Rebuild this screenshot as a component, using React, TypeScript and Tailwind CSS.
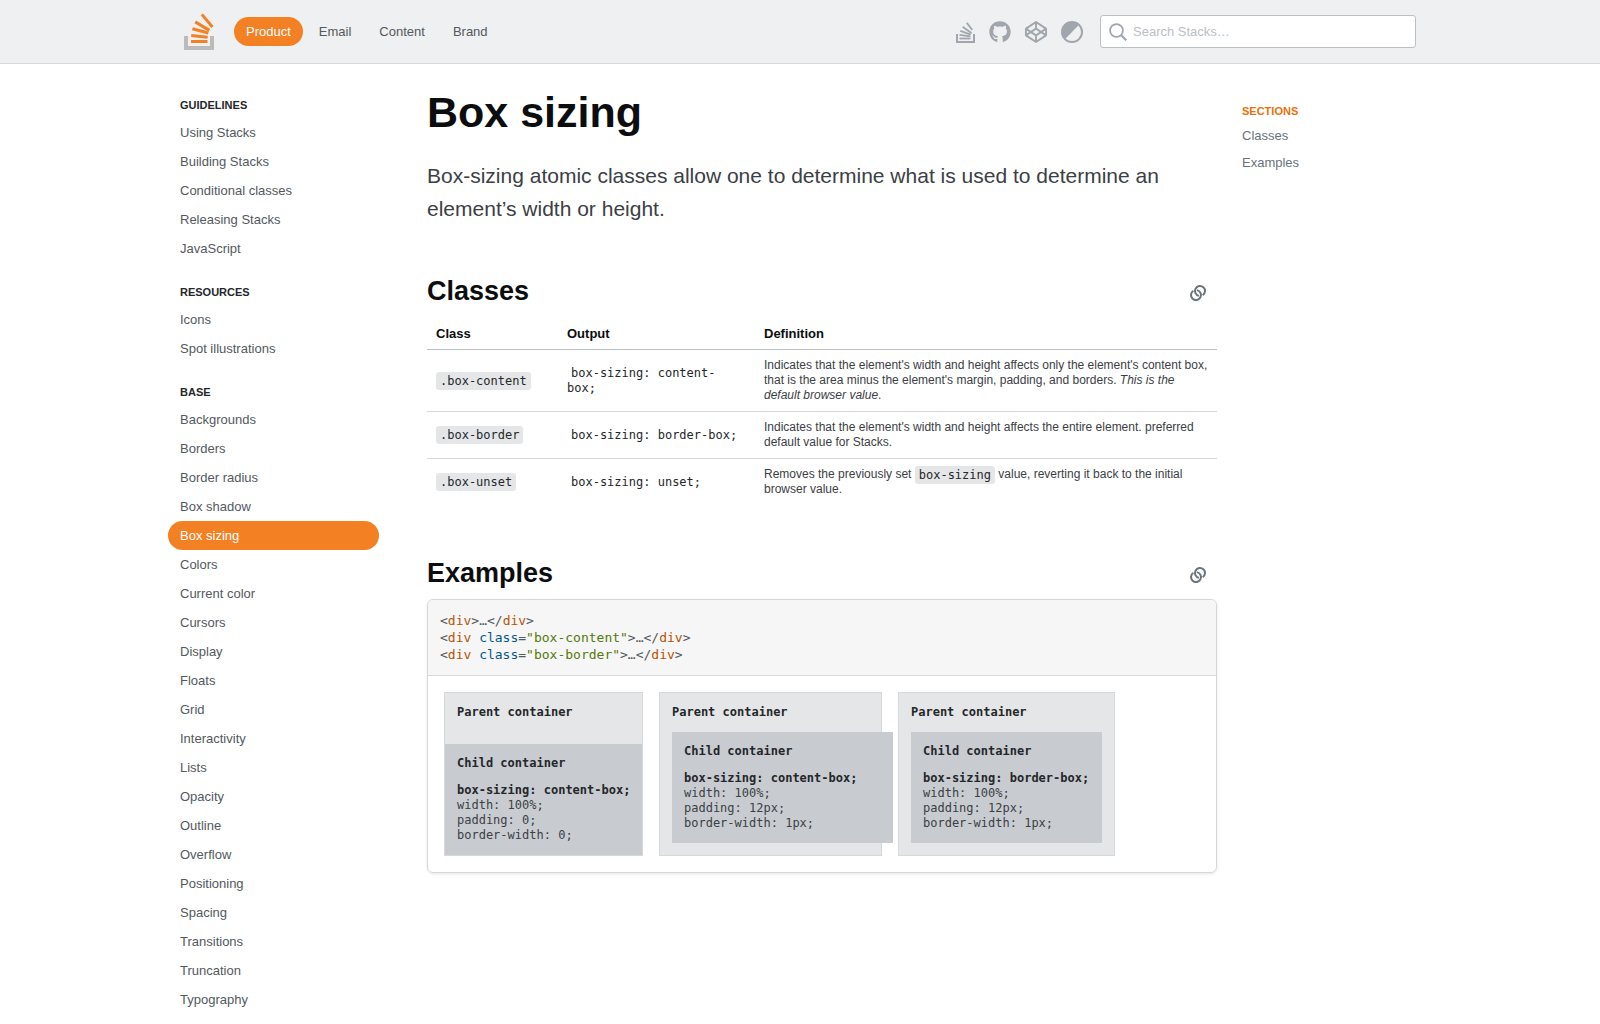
import React from 'react';
import { FaCodepen, FaGithub } from 'react-icons/fa';

const navItems = ['Product', 'Email', 'Content', 'Brand'];

const sideNav = [
    { title: 'Guidelines', items: ['Using Stacks', 'Building Stacks', 'Conditional classes', 'Releasing Stacks', 'JavaScript'] },
    { title: 'Resources', items: ['Icons', 'Spot illustrations'] },
    {
        title: 'Base',
        items: [
            'Backgrounds', 'Borders', 'Border radius', 'Box shadow', 'Box sizing', 'Colors', 'Current color', 'Cursors',
            'Display', 'Floats', 'Grid', 'Interactivity', 'Lists', 'Opacity', 'Outline', 'Overflow', 'Positioning',
            'Spacing', 'Transitions', 'Truncation', 'Typography', 'Vertical align',
        ],
    },
];

const mono = "font-['DejaVu_Sans_Mono',monospace]";

function StacksLogo() {
    return (
        <svg width="32" height="37" viewBox="0 0 32 37" fill="none">
            <path d="M0 23h4v10h22V23h4v14H0z" fill="#bcbbbb" />
            <g fill="#f48024">
                <rect x="7" y="27" width="16.5" height="3" />
                <rect x="7.4" y="21" width="16.5" height="3" transform="rotate(6 7.4 21)" />
                <rect x="8.8" y="14.3" width="16.5" height="3" transform="rotate(15 8.8 14.3)" />
                <rect x="12" y="7.6" width="16.5" height="3" transform="rotate(31 12 7.6)" />
                <rect x="19" y="0.4" width="16.5" height="3" transform="rotate(50 19 0.4)" />
            </g>
        </svg>
    );
}

function StacksGlyph() {
    return (
        <svg width="19" height="22" viewBox="0 0 19 22" fill="none">
            <path d="M0 13h2v7h15v-7h2v9H0z" fill="#9fa6ad" />
            <g fill="#9fa6ad">
                <rect x="3.5" y="16.6" width="11" height="1.8" />
                <rect x="3.6" y="13" width="11" height="1.8" transform="rotate(8 3.6 13)" />
                <rect x="4.6" y="9" width="11" height="1.8" transform="rotate(20 4.6 9)" />
                <rect x="7.2" y="5" width="11" height="1.8" transform="rotate(36 7.2 5)" />
                <rect x="11.4" y="1.2" width="9" height="1.8" transform="rotate(52 11.4 1.2)" />
            </g>
        </svg>
    );
}

function ThemeIcon() {
    return (
        <svg width="22" height="22" viewBox="0 0 22 22">
            <circle cx="11" cy="11" r="11" fill="#9fa6ad" />
            <path d="M17.4 4.6a9 9 0 0 1-12.8 12.8z" fill="#eff0f1" />
        </svg>
    );
}

function SearchIcon() {
    return (
        <svg width="18" height="18" viewBox="0 0 18 18" fill="none" stroke="#9fa6ad" strokeWidth="1.8">
            <circle cx="7.5" cy="7.5" r="6.4" />
            <path d="M12 12l5.2 5.2" strokeWidth="2.2" />
        </svg>
    );
}

function LinkIcon() {
    return (
        <svg width="18" height="18" viewBox="0 0 18 18" fill="none" stroke="#6a737c" strokeWidth="2">
            <path d="M9.96 11.89A5 5 0 1 1 13.65 11.24" />
            <path d="M8.04 6.11A5 5 0 1 1 4.35 6.76" />
        </svg>
    );
}

function Code({ children }: { children: React.ReactNode }) {
    return <code className={`${mono} text-[12px] leading-[13px] align-[-1px] text-[#242729] bg-[#e4e6e8] rounded-[3px] px-1 py-[2px]`}>{children}</code>;
}

function Output({ children }: { children: React.ReactNode }) {
    return <code className={`${mono} text-[12px] leading-[13px] align-[-1px] text-[#242729] px-1`}>{children}</code>;
}

function SectionHeading({ title, className }: { title: string; className?: string }) {
    return (
        <div className={`flex items-center justify-between ${className ?? ''}`}>
            <h2 className="text-[27px] leading-[34px] font-bold text-[#0c0d0e]">{title}</h2>
            <button className="mr-[10px] mt-[4px]"><LinkIcon /></button>
        </div>
    );
}

function Tag({ name }: { name: string }) {
    return <span className="text-[#b75301]">{name}</span>;
}

function CodeLine({ cls }: { cls?: string }) {
    return (
        <div>
            &lt;<Tag name="div" />
            {cls && (
                <>
                    {' '}<span className="text-[#015692]">class</span>=<span className="text-[#54790d]">"{cls}"</span>
                </>
            )}
            &gt;…&lt;/<Tag name="div" />&gt;
        </div>
    );
}

function ChildProps({ sizing, padding, border }: { sizing: string; padding: string; border: string }) {
    return (
        <>
            <div className="font-bold text-[#242729] mb-3">Child container</div>
            <div className="font-bold text-[#242729] whitespace-nowrap">box-sizing: {sizing};</div>
            <div>width: 100%;</div>
            <div>padding: {padding};</div>
            <div>border-width: {border};</div>
        </>
    );
}

export default function App() {
    return (
        <div className="h-screen overflow-hidden bg-white font-['Liberation_Sans',Arial,sans-serif]">
            {/* header */}
            <header className="h-16 bg-[#eff0f1] border-b border-[#d6d9dc]">
                <div className="w-[1264px] mx-auto h-full flex items-center pl-4 pr-4">
                    <a className="block mr-[18px] mt-[-1px]"><StacksLogo /></a>
                    <nav className="flex items-center gap-1">
                        {navItems.map((item, i) => (
                            <a
                                key={item}
                                className={`h-[29px] px-3 flex items-center rounded-full text-[13px] ${i === 0 ? 'bg-[#f48024] text-white' : 'text-[#525960]'}`}
                            >
                                {item}
                            </a>
                        ))}
                    </nav>
                    <div className="ml-auto flex items-center">
                        <div className="flex items-center gap-[14px] text-[#9fa6ad] mr-[17px]">
                            <StacksGlyph />
                            <FaGithub size={22} />
                            <FaCodepen size={22} />
                            <ThemeIcon />
                        </div>
                        <div className="w-[316px] h-[33px] bg-white border border-[#bbc0c4] rounded-[3px] flex items-center pl-2 gap-[6px]">
                            <SearchIcon />
                            <span className="text-[13px] text-[#bbc0c4]">Search Stacks…</span>
                        </div>
                    </div>
                </div>
            </header>

            <div className="w-[1264px] mx-auto flex">
                {/* left nav */}
                <aside className="w-[211px] shrink-0 pt-[34px] flex flex-col gap-[22px]">
                    {sideNav.map((group) => (
                        <div key={group.title}>
                            <h3 className="pl-3 mb-[6px] text-[11px] leading-[14px] font-bold uppercase text-[#242729]">{group.title}</h3>
                            <ul>
                                {group.items.map((item) => (
                                    <li
                                        key={item}
                                        className={`h-[29px] pl-3 flex items-center rounded-full text-[13px] ${item === 'Box sizing' ? 'bg-[#f48024] text-white' : 'text-[#525960]'}`}
                                    >
                                        {item}
                                    </li>
                                ))}
                            </ul>
                        </div>
                    ))}
                </aside>

                {/* content */}
                <main className="w-[790px] shrink-0 ml-12 pt-[21px]">
                    <h1 className="text-[43px] leading-[54px] font-bold text-[#0c0d0e]">Box sizing</h1>
                    <p className="mt-[20px] text-[21px] leading-[33px] text-[#3b4045]">
                        Box-sizing atomic classes allow one to determine what is used to determine an element’s width or height.
                    </p>

                    <SectionHeading title="Classes" className="mt-[49px]" />
                    <table className="w-full table-fixed border-collapse mt-[9px]">
                        <thead>
                            <tr className="border-b border-[#bbc0c4] text-[13px] text-[#0c0d0e] text-left">
                                <th className="w-[131px] px-[9px] pt-[7px] pb-[5px] font-bold">Class</th>
                                <th className="w-[197px] px-[9px] pt-[7px] pb-[5px] font-bold">Output</th>
                                <th className="px-[9px] pt-[7px] pb-[5px] font-bold">Definition</th>
                            </tr>
                        </thead>
                        <tbody className="text-[12px] leading-[15px] text-[#3b4045] align-middle">
                            <tr className="border-b border-[#d6d9dc]">
                                <td className="px-[9px] py-[8px]"><Code>.box-content</Code></td>
                                <td className="px-[9px] py-[8px]"><Output>box-sizing: content-box;</Output></td>
                                <td className="px-[9px] py-[8px]">
                                    Indicates that the element's width and height affects only the element's content box, that is the area minus the element's margin, padding, and borders. <em>This is the default browser value</em>.
                                </td>
                            </tr>
                            <tr className="border-b border-[#d6d9dc]">
                                <td className="px-[9px] py-[8px]"><Code>.box-border</Code></td>
                                <td className="px-[9px] py-[8px]"><Output>box-sizing: border-box;</Output></td>
                                <td className="px-[9px] py-[8px]">
                                    Indicates that the element's width and height affects the entire element. preferred default value for Stacks.
                                </td>
                            </tr>
                            <tr>
                                <td className="px-[9px] py-[8px]"><Code>.box-unset</Code></td>
                                <td className="px-[9px] py-[8px]"><Output>box-sizing: unset;</Output></td>
                                <td className="px-[9px] py-[8px]">
                                    Removes the previously set <Code>box-sizing</Code> value, reverting it back to the initial browser value.
                                </td>
                            </tr>
                        </tbody>
                    </table>

                    <SectionHeading title="Examples" className="mt-[51px]" />
                    <div className={`mt-[9px] border border-[#d6d9dc] rounded-[6px] shadow-[0_1px_3px_rgba(0,0,0,0.1)] ${mono} text-[12px]`}>
                        <div className="bg-[#f6f6f6] rounded-t-[6px] border-b border-[#d6d9dc] p-3 text-[13px] leading-[17px] text-[#525960]">
                            <CodeLine />
                            <CodeLine cls="box-content" />
                            <CodeLine cls="box-border" />
                        </div>
                        <div className="flex gap-4 p-4 leading-[15px] text-[#3b4045]">
                            <div className="w-[199px] bg-[#e4e6e8] border border-[#d6d9dc]">
                                <div className="px-3 pt-3 pb-6 font-bold text-[#242729]">Parent container</div>
                                <div className="bg-[#c8ccd0] p-3"><ChildProps sizing="content-box" padding="0" border="0" /></div>
                            </div>
                            <div className="w-[223px] bg-[#e4e6e8] border border-[#d6d9dc] p-3">
                                <div className="mb-3 font-bold text-[#242729]">Parent container</div>
                                <div className="w-[221px] bg-[#c8ccd0] p-3"><ChildProps sizing="content-box" padding="12px" border="1px" /></div>
                            </div>
                            <div className="w-[217px] bg-[#e4e6e8] border border-[#d6d9dc] p-3">
                                <div className="mb-3 font-bold text-[#242729]">Parent container</div>
                                <div className="bg-[#c8ccd0] p-3"><ChildProps sizing="border-box" padding="12px" border="1px" /></div>
                            </div>
                        </div>
                    </div>
                </main>

                {/* on this page */}
                <aside className="ml-[25px] pt-[40px]">
                    <h4 className="text-[11px] leading-[14px] font-bold uppercase text-[#e8710a]">Sections</h4>
                    <div className="mt-[4px] text-[13px] leading-[27px] text-[#6a737c]">
                        <div>Classes</div>
                        <div>Examples</div>
                    </div>
                </aside>
            </div>
        </div>
    );
}
